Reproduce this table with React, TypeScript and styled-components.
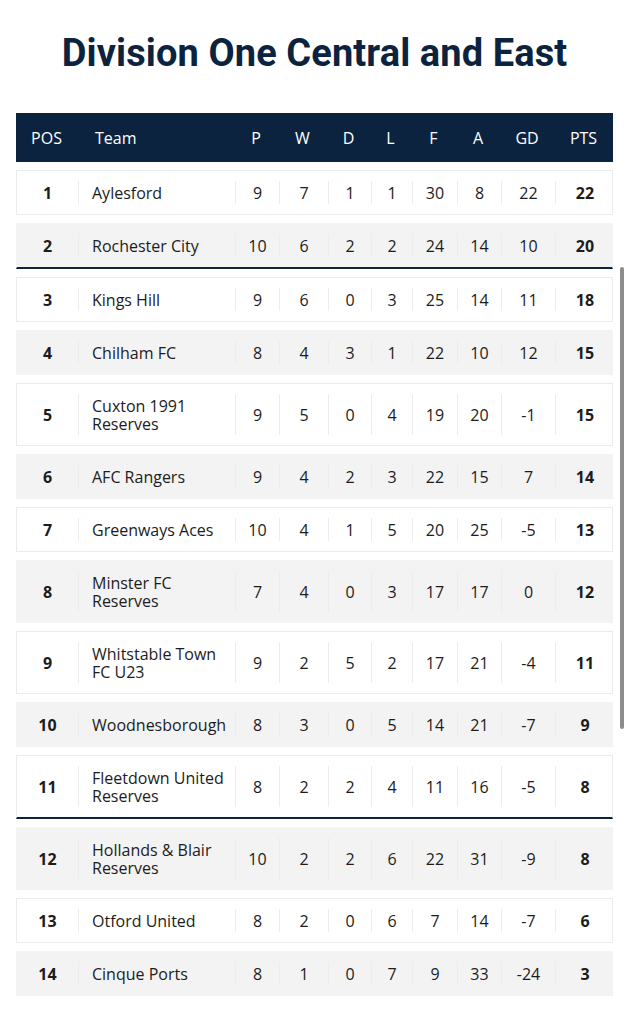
import React from "react";
import styled, { createGlobalStyle } from "styled-components";

const GlobalStyle = createGlobalStyle`
  html, body {
    margin: 0;
    padding: 0;
    background: #ffffff;
  }
  body {
    font-family: "Open Sans", "Noto Sans", sans-serif;
    color: #1c1c1c;
  }
  * { box-sizing: border-box; }
`;

const NAVY = "#0c2340";
const COLUMNS = "61px 157px 44px 49px 43px 41px 45px 44px 54px 59px";

const Page = styled.div`
  position: relative;
  width: 629px;
  padding: 30px 16px 28px;
`;

const Title = styled.h1`
  margin: 0 0 37px;
  font-family: Roboto, "Open Sans", sans-serif;
  font-weight: 700;
  font-size: 38px;
  line-height: 46px;
  color: ${NAVY};
  text-align: center;
  letter-spacing: 0.1px;
`;

const Table = styled.div`
  display: flex;
  flex-direction: column;
  gap: 8px;
  width: 597px;
`;

const HeaderRow = styled.div`
  display: grid;
  grid-template-columns: ${COLUMNS};
  height: 49px;
  background: ${NAVY};
  color: #ffffff;
  font-size: 16px;
  align-items: center;
`;

const HeadCell = styled.div<{ $left?: boolean }>`
  text-align: ${(p) => (p.$left ? "left" : "center")};
  padding-left: ${(p) => (p.$left ? "18px" : "0")};
  padding-top: 1px;
`;

const Row = styled.div<{ $alt: boolean; $line: boolean }>`
  display: grid;
  grid-template-columns: ${COLUMNS};
  min-height: 45px;
  background: ${(p) => (p.$alt ? "#f3f3f3" : "#ffffff")};
  border: 1px solid ${(p) => (p.$alt ? "#f3f3f3" : "#ebebeb")};
  border-bottom: ${(p) => (p.$line ? `2px solid ${NAVY}` : undefined)};
  font-size: 16px;
  line-height: 18px;
`;

const Cell = styled.div<{ $first?: boolean; $bold?: boolean; $team?: boolean }>`
  display: flex;
  align-items: center;
  justify-content: ${(p) => (p.$team ? "flex-start" : "center")};
  margin: 10px 0;
  padding: ${(p) => (p.$team ? "3px 5px 2px 13px" : "0")};
  border-left: ${(p) => (p.$first ? "none" : "1px solid #ececec")};
  font-weight: ${(p) => (p.$bold ? 700 : 400)};
  color: #1c1c1c;
`;

const ScrollThumb = styled.div`
  position: absolute;
  left: 620px;
  top: 267px;
  width: 4px;
  height: 462px;
  border-radius: 2px;
  background: #8c8c8c;
`;

type Team = [number, string, number, number, number, number, number, number, number, number];

const teams: Team[] = [
  [1, "Aylesford", 9, 7, 1, 1, 30, 8, 22, 22],
  [2, "Rochester City", 10, 6, 2, 2, 24, 14, 10, 20],
  [3, "Kings Hill", 9, 6, 0, 3, 25, 14, 11, 18],
  [4, "Chilham FC", 8, 4, 3, 1, 22, 10, 12, 15],
  [5, "Cuxton 1991 Reserves", 9, 5, 0, 4, 19, 20, -1, 15],
  [6, "AFC Rangers", 9, 4, 2, 3, 22, 15, 7, 14],
  [7, "Greenways Aces", 10, 4, 1, 5, 20, 25, -5, 13],
  [8, "Minster FC Reserves", 7, 4, 0, 3, 17, 17, 0, 12],
  [9, "Whitstable Town FC U23", 9, 2, 5, 2, 17, 21, -4, 11],
  [10, "Woodnesborough", 8, 3, 0, 5, 14, 21, -7, 9],
  [11, "Fleetdown United Reserves", 8, 2, 2, 4, 11, 16, -5, 8],
  [12, "Hollands & Blair Reserves", 10, 2, 2, 6, 22, 31, -9, 8],
  [13, "Otford United", 8, 2, 0, 6, 7, 14, -7, 6],
  [14, "Cinque Ports", 8, 1, 0, 7, 9, 33, -24, 3],
];

const headers = ["POS", "Team", "P", "W", "D", "L", "F", "A", "GD", "PTS"];
const lineAfter = new Set([2, 11]);

export default function App() {
  return (
    <>
      <GlobalStyle />
      <Page>
        <Title>Division One Central and East</Title>
        <Table>
          <HeaderRow>
            {headers.map((h) => (
              <HeadCell key={h} $left={h === "Team"}>
                {h}
              </HeadCell>
            ))}
          </HeaderRow>
          {teams.map((t) => {
            const [pos, name, ...stats] = t;
            return (
              <Row key={pos} $alt={pos % 2 === 0} $line={lineAfter.has(pos)}>
                <Cell $first $bold>
                  {pos}
                </Cell>
                <Cell $team>{name}</Cell>
                {stats.map((s, i) => (
                  <Cell key={i} $bold={i === stats.length - 1}>
                    {s}
                  </Cell>
                ))}
              </Row>
            );
          })}
        </Table>
        <ScrollThumb />
      </Page>
    </>
  );
}
